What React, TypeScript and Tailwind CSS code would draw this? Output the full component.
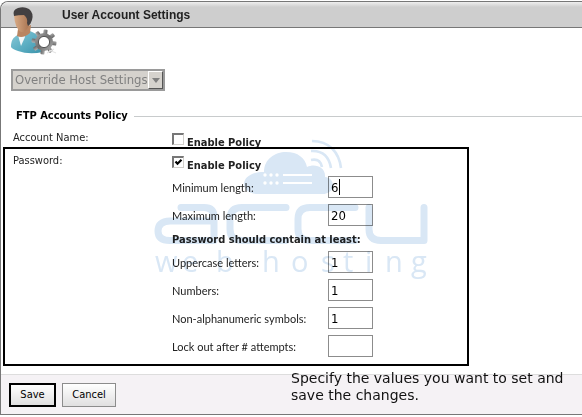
import { useState } from 'react';

type LimitRowProps = {
  id: string;
  label: string;
  initial: string;
  caret?: boolean;
};

function LimitRow({ id, label, initial, caret }: LimitRowProps) {
  const [value, setValue] = useState(initial);
  return (
    <div className="flex h-7 items-center">
      <label htmlFor={id} className="w-[156px] shrink-0 pt-px font-['Lato',sans-serif] whitespace-nowrap">
        {label}
      </label>
      <div className="relative">
        <input
          id={id}
          type="text"
          value={value}
          onChange={(event) => setValue(event.target.value)}
          className="block h-[22px] w-[45px] border border-[#8c8c8c] bg-white px-[2px] text-[13px] text-black outline-none"
        />
        {caret && <span className="absolute top-[3px] left-[11px] h-4 w-px bg-black" />}
      </div>
    </div>
  );
}

type PolicyCheckboxProps = {
  id: string;
  initial: boolean;
};

function PolicyCheckbox({ id, initial }: PolicyCheckboxProps) {
  const [checked, setChecked] = useState(initial);
  return (
    <div className="flex items-start gap-[3px]">
      <span className="relative block h-3 w-3">
        <input
          id={id}
          type="checkbox"
          checked={checked}
          onChange={() => setChecked(!checked)}
          className="block h-3 w-3 appearance-none border-t-2 border-r border-b border-l-2 border-t-[#777] border-r-[#d2d0cc] border-b-[#d2d0cc] border-l-[#777] bg-white"
        />
        {checked && (
          <svg viewBox="0 0 12 12" className="pointer-events-none absolute inset-0 h-3 w-3">
            <path d="M3.5 5.5 5.5 7.7 9.5 3.7" fill="none" stroke="#000" strokeWidth="2.2" />
          </svg>
        )}
      </span>
      <label htmlFor={id} className="pt-[3px] leading-[14px] font-bold">
        Enable Policy
      </label>
    </div>
  );
}

function UserIcon() {
  return (
    <svg viewBox="0 0 48 50" className="h-[50px] w-12" aria-hidden="true">
      <defs>
        <linearGradient id="shirt" x1="0" y1="0" x2="1" y2="1">
          <stop offset="0" stopColor="#8cc9d8" />
          <stop offset="0.5" stopColor="#5fb0c4" />
          <stop offset="1" stopColor="#3b93ab" />
        </linearGradient>
        <linearGradient id="skin" x1="0" y1="0" x2="1" y2="0">
          <stop offset="0" stopColor="#d9ab86" />
          <stop offset="1" stopColor="#a97552" />
        </linearGradient>
        <linearGradient id="steel" x1="0" y1="0" x2="1" y2="1">
          <stop offset="0" stopColor="#a8a8a8" />
          <stop offset="0.5" stopColor="#6e6e6e" />
          <stop offset="1" stopColor="#b4b4b4" />
        </linearGradient>
      </defs>
      <path d="M1 41C1 35 3 31 8 29L20 25Q28 28 31 33L33 46Q19 49 8 45Q2 43 1 41Z" fill="url(#shirt)" />
      <path d="M8 29 11 40 15 31 14 28Z" fill="#f2f7f8" />
      <path d="M8 23 7 30Q13 33 20 27L21 19Z" fill="#b98561" />
      <path d="M4 9Q6 4 13 5L18 11 19 19Q16 27 11 26Q5 23 4 9Z" fill="url(#skin)" />
      <path d="M4 10Q2 4 8 2Q14 0 19 3Q24 7 22 14Q21 18 18 20L17 17Q18 12 14 9Q8 9 4 10Z" fill="#434041" />
      <g transform="translate(34 36)">
        <g fill="url(#steel)">
          {[0, 45, 90, 135].map((angle) => (
            <rect key={angle} x="-2" y="-12.5" width="4" height="25" rx="1" transform={`rotate(${angle + 8})`} />
          ))}
          <circle r="9" />
        </g>
        <circle r="5.6" fill="#fff" stroke="#555" strokeWidth="1" />
        <path d="M5 8 12 11M3 11 10 7" stroke="#e4e4e4" strokeWidth="1.2" />
      </g>
    </svg>
  );
}

function Watermark() {
  return (
    <svg
      viewBox="0 0 276 146"
      className="pointer-events-none absolute -top-[9px] left-[149px] h-[146px] w-[276px] overflow-visible mix-blend-multiply"
      aria-hidden="true"
    >
      <path
        d="M104 54C85 54 84 32 110 32C110 19 121 12 132 12C144 12 151 18 153 27C161 23 172 27 171 37C182 38 182 54 168 54Z"
        fill="#d9e7f5"
      />
      <g fill="none" stroke="#d9e7f5" strokeWidth="2.6">
        <path d="M157 20Q166 18 168 27" />
        <path d="M157 11Q174 10 177 28" />
        <path d="M158 1C175 1 185 12 187 28" />
      </g>
      <g fill="#fff">
        <circle cx="111" cy="35" r="1.7" />
        <circle cx="117" cy="35" r="1.7" />
        <circle cx="123" cy="35" r="1.7" />
        <circle cx="111" cy="43" r="1.7" />
        <circle cx="117" cy="43" r="1.7" />
        <circle cx="123" cy="43" r="1.7" />
        <rect x="129" y="34" width="29" height="2" />
        <rect x="129" y="42" width="29" height="2" />
      </g>
      <g fill="none" stroke="#d9e7f5" strokeWidth="7" strokeLinecap="round" strokeLinejoin="round">
        <path d="M27 67.5H50Q60 67.5 60 77V100.5H16Q4 100.5 4 91T16 81H60" />
        <path d="M132 67.5H88Q76 67.5 76 79V89Q76 100.5 88 100.5H132" />
        <path d="M201 67.5H156Q144 67.5 144 79V89Q144 100.5 156 100.5H201" />
        <path d="M215 67.5V89Q215 100.5 227 100.5H270V67.5" />
      </g>
      <text
        x="1 28 62 80 108 137 167 189 211 231 257"
        y="132"
        fill="#d9e7f5"
        fontFamily="'Open Sans', sans-serif"
        fontSize="29"
      >
        web hosting
      </text>
    </svg>
  );
}

export default function App() {
  return (
    <div className="min-h-[417px] bg-white pt-px font-['DejaVu_Sans_Condensed','DejaVu_Sans',sans-serif] text-[11px] leading-[14px] text-[#222]">
      <main className="rounded-tl-lg border-t border-b border-l border-[#777]">
        <header className="relative flex h-[26px] items-center rounded-tl-lg border-b border-[#777] bg-linear-to-b from-[#efefef] to-[#cecece] to-20% pl-[61px]">
          <div className="absolute top-1 left-[9px]">
            <UserIcon />
          </div>
          <h1 className="font-['Liberation_Sans',Arial,sans-serif] text-xs font-bold">User Account Settings</h1>
        </header>

        <div className="px-[10px] pt-[41px]">
          <div className="relative w-[154px]">
            <select
              disabled
              aria-label="Settings source"
              className="block h-[22px] w-full appearance-none border-2 border-[#9a9a9a] bg-[#d5d2cd] pl-[2px] text-[13px] leading-[18px] text-[#808080] opacity-100"
            >
              <option>Override Host Settings</option>
            </select>
            <span className="pointer-events-none absolute top-[2px] right-[2px] flex h-[18px] w-[15px] items-center justify-center border-t border-r border-b border-l border-t-white border-r-[#555] border-b-[#555] border-l-white bg-[#d5d2cd]">
              <svg viewBox="0 0 8 5" className="h-[5px] w-2">
                <path d="M0 0H8L4 5Z" fill="#808080" />
              </svg>
            </span>
          </div>
        </div>

        <section>
          <div className="flex items-center gap-[6px] pt-[18px] pl-[15px]">
            <h2 className="font-bold whitespace-nowrap text-black">FTP Accounts Policy</h2>
            <span className="h-px flex-1 bg-[#c8cbcc]" />
          </div>

          <div className="flex h-6 items-start pl-3">
            <span className="w-[159px] shrink-0 pt-2">Account Name:</span>
            <div className="pt-[10px]">
              <PolicyCheckbox id="account-policy" initial={false} />
            </div>
          </div>

          <div className="relative ml-[2px] w-[466px] border-2 border-black pb-[4px]">
            <div className="flex items-start pl-2">
              <span className="w-[159px] shrink-0 pt-[5px]">Password:</span>
              <div className="flex-1">
                <div className="h-6 pt-[7px]">
                  <PolicyCheckbox id="password-policy" initial={true} />
                </div>
                <LimitRow id="min-length" label="Minimum length:" initial="6" caret />
                <LimitRow id="max-length" label="Maximum length:" initial="20" />
                <h3 className="h-[19px] pt-1 font-bold">Password should contain at least:</h3>
                <LimitRow id="uppercase" label="Uppercase letters:" initial="1" />
                <LimitRow id="numbers" label="Numbers:" initial="1" />
                <LimitRow id="symbols" label="Non-alphanumeric symbols:" initial="1" />
                <LimitRow id="lockout" label="Lock out after # attempts:" initial="" />
              </div>
            </div>
            <Watermark />
          </div>
        </section>

        <footer className="relative mt-2 flex h-10 items-start gap-[6px] border-t border-[#ddd] bg-[#f5f2f5] pt-2 pl-2">
          <button
            type="button"
            className="h-6 w-[47px] border-2 border-black bg-linear-to-b from-white to-[#e0dfe0] text-[11px] text-black"
          >
            Save
          </button>
          <button
            type="button"
            className="h-6 w-[54px] border border-[#8c8c8c] bg-linear-to-b from-white to-[#e0dfe0] text-[11px] text-black"
          >
            Cancel
          </button>
          <p className="absolute -top-[5px] left-[290px] w-[284px] font-['DejaVu_Sans',sans-serif] text-sm leading-[17px] text-[#111]">
            Specify the values you want to set and save the changes.
          </p>
        </footer>
      </main>
    </div>
  );
}
